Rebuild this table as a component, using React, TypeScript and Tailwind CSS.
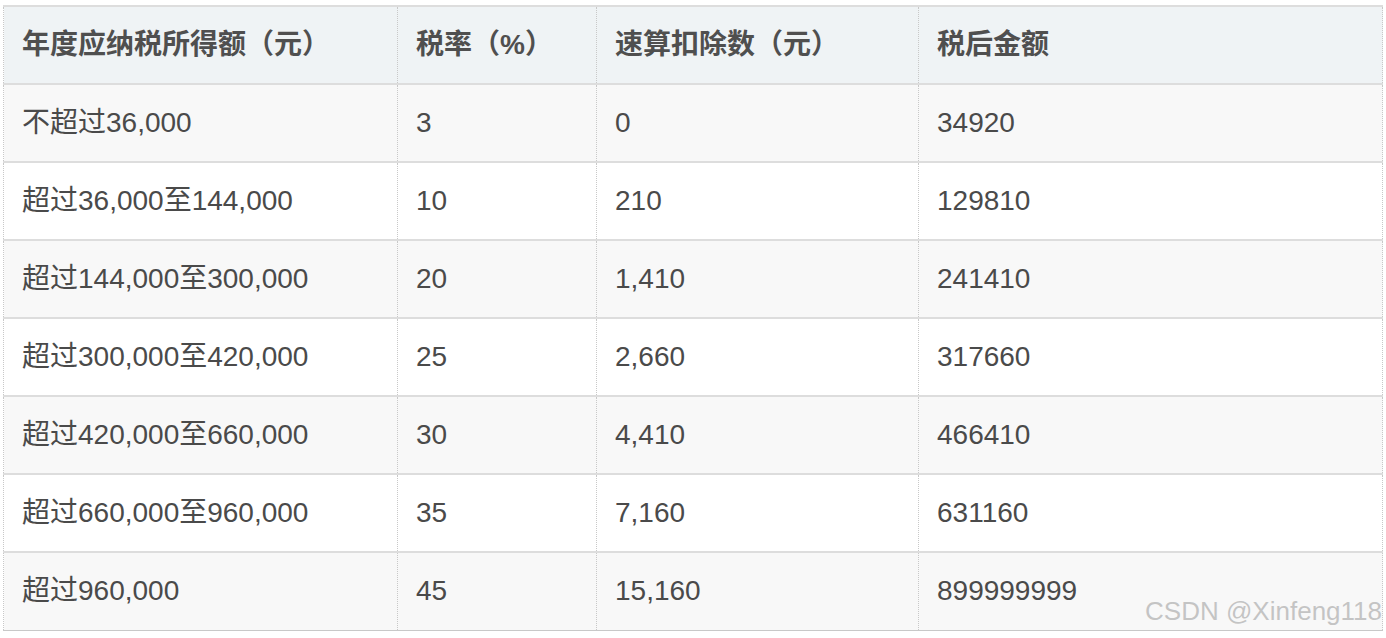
import React from "react";

const rows: [string, string, string, string][] = [
  ["不超过36,000", "3", "0", "34920"],
  ["超过36,000至144,000", "10", "210", "129810"],
  ["超过144,000至300,000", "20", "1,410", "241410"],
  ["超过300,000至420,000", "25", "2,660", "317660"],
  ["超过420,000至660,000", "30", "4,410", "466410"],
  ["超过660,000至960,000", "35", "7,160", "631160"],
  ["超过960,000", "45", "15,160", "899999999"],
];

const headers = ["年度应纳税所得额（元）", "税率（%）", "速算扣除数（元）", "税后金额"];

export default function App() {
  return (
    <div
      className="relative w-[1386px] h-[638px] bg-white pt-[5px] pl-[3px] overflow-hidden"
      style={{ fontFamily: '"Liberation Sans", "Noto Sans CJK SC", sans-serif' }}
    >
      <table className="border-collapse table-fixed w-[1379px] text-[28px] text-[#4a4a4a]">
        <colgroup>
          <col className="w-[394px]" />
          <col className="w-[199px]" />
          <col className="w-[322px]" />
          <col className="w-[464px]" />
        </colgroup>
        <thead>
          <tr className="bg-[#eff3f5] border-t-2 border-solid border-[#dddddd]">
            {headers.map((h) => (
              <th
                key={h}
                className="h-[78px] px-[18px] text-left align-middle font-bold text-[#4f4f4f] border-x border-dotted border-[#c8c8c8] whitespace-nowrap"
              >
                {h}
              </th>
            ))}
          </tr>
        </thead>
        <tbody>
          {rows.map((r, i) => (
            <tr
              key={i}
              className={`${i % 2 === 0 ? "bg-[#f8f8f8]" : "bg-white"} border-t-2 border-solid border-[#dddddd] ${i === rows.length - 1 ? "border-b border-b-dotted border-b-[#c8c8c8]" : ""}`}
            >
              {r.map((c, j) => (
                <td
                  key={j}
                  className="h-[78px] px-[18px] text-left align-middle font-normal border-x border-dotted border-[#c8c8c8] whitespace-nowrap"
                >
                  {c}
                </td>
              ))}
            </tr>
          ))}
        </tbody>
      </table>
      <div
        className="absolute right-[4px] top-[596px] text-[26px] leading-[30px] text-[#c4c4c4] whitespace-nowrap"
        style={{ textShadow: "0 0 1px #ffffff" }}
      >
        CSDN @Xinfeng118
      </div>
    </div>
  );
}
